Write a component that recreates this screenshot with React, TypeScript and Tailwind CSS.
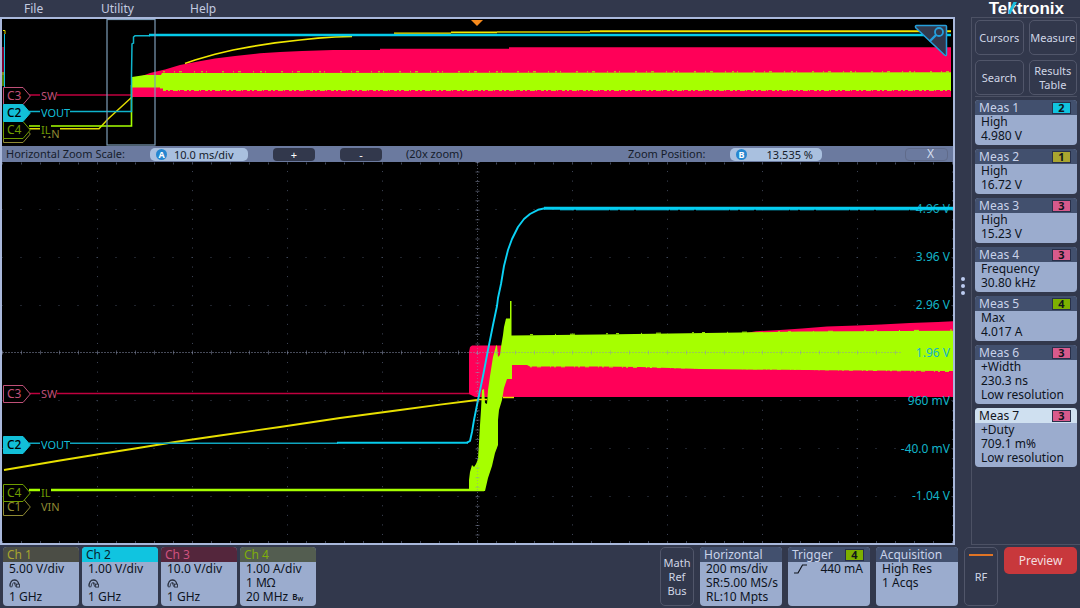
import type { ReactNode } from "react";

type Tone = "olive" | "cyan" | "pink" | "green";

const badgeTone: Record<Tone, string> = {
  olive: "bg-[#aaa52f]",
  cyan: "bg-[#10c4e0]",
  pink: "bg-[#d85a8c]",
  green: "bg-[#7db000]",
};

const tagTone: Record<Tone, string> = {
  olive: "text-[#8f8a33]",
  cyan: "text-[#12bfd8]",
  pink: "text-[#c05078]",
  green: "text-[#6f9c00]",
};

function Badge({ tone, children }: { tone: Tone; children: ReactNode }) {
  return (
    <span
      className={`flex h-[12px] w-[19px] items-center justify-center border border-[#28304a] text-[11px] leading-none font-bold text-[#10141c] ${badgeTone[tone]}`}
    >
      {children}
    </span>
  );
}

function Card({
  title,
  badge,
  head = "bg-[#42506e] text-[#c9d3ea]",
  className = "",
  children,
}: {
  title: string;
  badge?: ReactNode;
  head?: string;
  className?: string;
  children: ReactNode;
}) {
  return (
    <button
      type="button"
      className={`flex flex-col overflow-hidden rounded-[4px] bg-[#9bacce] pb-[2px] text-left text-[#0d131d] ${className}`}
    >
      <span className={`flex h-[15px] w-full items-center justify-between pr-[6px] pl-[4px] leading-[15px] ${head}`}>
        {title}
        {badge}
      </span>
      <span className="flex w-full flex-col pl-[6px]">{children}</span>
    </button>
  );
}

function Row({ children }: { children: ReactNode }) {
  return <span className="flex h-[14px] items-center leading-[14px] whitespace-pre">{children}</span>;
}

const measurements: { id: number; ch: string; tone: Tone; rows: string[]; active?: boolean }[] = [
  { id: 1, ch: "2", tone: "cyan", rows: ["High", "4.980 V"] },
  { id: 2, ch: "1", tone: "olive", rows: ["High", "16.72 V"] },
  { id: 3, ch: "3", tone: "pink", rows: ["High", "15.23 V"] },
  { id: 4, ch: "3", tone: "pink", rows: ["Frequency", "30.80 kHz"] },
  { id: 5, ch: "4", tone: "green", rows: ["Max", "4.017 A"] },
  { id: 6, ch: "3", tone: "pink", rows: ["+Width", "230.3 ns", "Low resolution"] },
  { id: 7, ch: "3", tone: "pink", rows: ["+Duty", "709.1 m%", "Low resolution"], active: true },
];

function ProbeIcon() {
  return (
    <svg width="12" height="9" viewBox="0 0 12 9" fill="none" stroke="#2a3140" aria-hidden="true">
      <path d="M1 7.5C1 3 2.8 1 5.3 1S9.6 3 9.6 5" strokeWidth="1.3" />
      <path d="M3.2 7.5C3.2 5 4 3.6 5.3 3.6S7 4.5 7.3 6M1 7.8h2.2M5.2 3.6l1.6 4.2" strokeWidth="0.9" />
      <rect x="7.6" y="5.2" width="2.9" height="2.9" strokeWidth="0.9" />
    </svg>
  );
}

const channels: { name: string; head: string; rows: ReactNode[] }[] = [
  { name: "Ch 1", head: "bg-[#4b4d45] text-[#a9a52f]", rows: ["5.00 V/div", <ProbeIcon key="p" />, "1 GHz"] },
  { name: "Ch 2", head: "bg-[#10c4e0] text-[#06222c]", rows: ["1.00 V/div", <ProbeIcon key="p" />, "1 GHz"] },
  { name: "Ch 3", head: "bg-[#54263c] text-[#d0527f]", rows: ["10.0 V/div", <ProbeIcon key="p" />, "1 GHz"] },
  {
    name: "Ch 4",
    head: "bg-[#535d50] text-[#7fae0a]",
    rows: [
      "1.00 A/div",
      "1 MΩ",
      <span key="bw" className="flex items-center">
        20 MHz
        <span className="pl-[4px] text-[8px] font-semibold">B</span>
        <span className="pt-[3px] text-[6px] font-semibold">W</span>
      </span>,
    ],
  },
];

function Tag({ name, tone, place, solid = false }: { name: string; tone: Tone; place: string; solid?: boolean }) {
  return (
    <div className={`absolute left-[1px] flex h-[18px] w-[28px] items-center pl-[4px] ${tagTone[tone]} ${place}`}>
      <svg className="absolute inset-0" width="28" height="18" viewBox="0 0 28 18" aria-hidden="true">
        <path d="M.5.5H20L27.3 9 20 17.5H.5Z" fill={solid ? "currentColor" : "#000"} stroke="currentColor" />
      </svg>
      <span className={`relative ${solid ? "font-medium text-black" : ""}`}>{name}</span>
    </div>
  );
}

function Label({ tone, place, children }: { tone: Tone; place: string; children: ReactNode }) {
  return (
    <span className={`absolute left-[38px] bg-black pl-[1px] text-[11px] leading-[12px] ${tagTone[tone]} ${place}`}>
      {children}
    </span>
  );
}

function Overview() {
  return (
    <div className="relative h-[127px] text-[12px]">
      <svg className="absolute inset-0 h-full w-full" viewBox="2 19 951 127" preserveAspectRatio="none" role="img" aria-label="Acquisition overview">
        <g fill="none">
          <path d="M4.5 34V87" stroke="#10c4e0" />
          <path d="M3 47V75" stroke="#ff0058" />
          <path d="M3 72V86" stroke="#a6ff00" />
          <path d="M3 30.5H5V34" stroke="#e8e000" />
          <path d="M29 95H132" stroke="#c0003f" strokeWidth="1.4" />
          <path d="M29 128.7H99L108 119 132 97" stroke="#e0da00" strokeWidth="1.5" />
          <path d="M185 63.5 195 60 215 54.2 233 50 250 46.8 275 42.8 300 40 318 38.2 335 37 352 36.5" stroke="#f0e800" strokeWidth="1.7" />
        </g>
        <path d="M131.500 80 142 76 150 73 165 69.500 180 65 198 61.500 215 58.500 235 56 260 53.300 280 52 302 51 333 50 H380V48.700H509V47.300H951V97H131.500Z" fill="#ff0058" />
        <path d="M132 77 145 75 161 75 162 73 951 72.300V90H163V88.500H160V87.500H132Z" fill="#a6ff00" />
        <g fill="none" stroke="#a6ff00">
          <path d="M163 71.800H951" strokeDasharray="2 9 1 4 3 12 1 6 2 3 1 15" />
          <path d="M163 90.400H951" strokeDasharray="3 2 2 3 5 1 1 4" />
          <path d="M29 126H131.500V85" strokeWidth="1.6" />
        </g>
        <g fill="none">
          <path d="M29 111.500H131.500V75L132 44 133.500 43V37L135 35.800H150" stroke="#0fb4cc" strokeWidth="1.5" />
          <path d="M149 35H951" stroke="#05cbea" strokeWidth="2.4" />
          <path d="M394 33.200H451" stroke="#f0e800" strokeWidth="1.2" />
          <path d="M451 32.400H497" stroke="#f0e800" strokeWidth="1.7" />
          <path d="M497 32H590" stroke="#d8d000" strokeWidth="1.5" />
          <path d="M590 31.200H951" stroke="#f0e400" strokeWidth="2" />
          <rect x="107" y="19.500" width="48" height="125.500" stroke="#7d9db8" strokeWidth="1.2" />
        </g>
        <path d="M471 20H483L477 26Z" fill="#f78a1d" />
      </svg>
      <Tag name="" tone="olive" place="top-[106px]" />
      <Label tone="olive" place="top-[109px]">VIN</Label>
      <Tag name="C4" tone="green" place="top-[102px]" />
      <Label tone="green" place="top-[105px]">IL</Label>
      <Tag name="C3" tone="pink" place="top-[68px]" />
      <Label tone="pink" place="top-[71px]">SW</Label>
      <Tag name="C2" tone="cyan" solid place="top-[85px]" />
      <Label tone="cyan" place="top-[88px]">VOUT</Label>
      <button type="button" aria-label="Zoom" className="absolute top-[5px] right-[5px]">
        <svg width="34" height="34" viewBox="0 0 34 34" fill="none" stroke="#259fdc" aria-hidden="true">
          <path d="M2.500 1.500H31.500Q32.500 1.500 32.500 2.500V30.500Q32.500 32.500 30.500 31L1.800 3.800Q.8 1.800 2.500 1.500Z" fill="#32384c" strokeWidth="1.5" />
          <circle cx="25" cy="8" r="4" strokeWidth="1.8" />
          <path d="M22 11 15.500 17.500" strokeWidth="2.4" />
        </svg>
      </button>
    </div>
  );
}

function ZoomBar() {
  return (
    <div className="flex h-[16px] items-center bg-[#6b7a9f] text-[11px] text-[#151c2b]">
      <label htmlFor="zoom-scale" className="w-[148px] pl-[4px]">
        Horizontal Zoom Scale:
      </label>
      <span className="flex h-[13px] w-[98px] items-center gap-[7px] rounded-[5px] bg-[#a9c0df] pl-[6px]">
        <span className="flex size-[11px] items-center justify-center rounded-full bg-[#2687d0] text-[9px] leading-none font-bold text-white">A</span>
        <input id="zoom-scale" defaultValue="10.0 ms/div" className="h-[13px] w-[68px] bg-transparent leading-[13px] outline-none" />
      </span>
      <button type="button" aria-label="Increase zoom" className="ml-[25px] flex h-[13px] w-[42px] items-center justify-center rounded-[4px] bg-[#32384c] leading-none text-white">
        +
      </button>
      <button type="button" aria-label="Decrease zoom" className="ml-[25px] flex h-[13px] w-[42px] items-center justify-center rounded-[4px] bg-[#32384c] leading-none text-white">
        -
      </button>
      <span className="ml-[24px]">(20x zoom)</span>
      <label htmlFor="zoom-position" className="ml-auto w-[102px]">
        Zoom Position:
      </label>
      <span className="flex h-[13px] w-[92px] items-center justify-between rounded-[5px] bg-[#a9c0df] pr-[9px] pl-[6px]">
        <span className="flex size-[11px] items-center justify-center rounded-full bg-[#2687d0] text-[9px] leading-none font-bold text-white">B</span>
        <input id="zoom-position" defaultValue="13.535 %" className="h-[13px] w-[60px] bg-transparent text-right leading-[13px] outline-none" />
      </span>
      <button type="button" aria-label="Close zoom" className="mr-[5px] ml-[83px] flex h-[13px] w-[43px] items-center justify-center rounded-[4px] border border-[#606b8a] pl-[8px] text-[12px] leading-none text-[#d3ddf0]">
        X
      </button>
    </div>
  );
}

const gridColumns = [97, 192, 287, 382, 572, 667, 762, 857];
const gridRows = [209, 257, 305, 400, 448, 496];

const scaleLabels = [
  { text: "3.96 V", place: "top-[24.9%]" },
  { text: "2.96 V", place: "top-[37.5%]" },
  { text: "1.96 V", place: "top-[50.1%]" },
  { text: "960 mV", place: "top-[62.6%]" },
  { text: "-40.0 mV", place: "top-[75.2%]" },
  { text: "-1.04 V", place: "top-[87.7%]" },
];

function Graticule() {
  return (
    <g fill="none" stroke="#3f4658">
      {gridColumns.map((x) => (
        <path key={x} d={`M${x}.5 162V543`} strokeDasharray="1 8.55" strokeDashoffset="0.5" />
      ))}
      {gridRows.map((y) => (
        <path key={y} d={`M2 ${y}.5H953`} strokeDasharray="1 18" strokeDashoffset="0.5" />
      ))}
      <path d="M2 163.500H953M2 542H953" strokeWidth="2" strokeDasharray="1 18" />
      <path d="M952.500 162V543" strokeDasharray="1 8.55" />
    </g>
  );
}

function Axes() {
  return (
    <g fill="none" stroke="#8c93b0" strokeOpacity="0.5">
      <path d="M2 352.500H901" strokeDasharray="2 1" />
      <path d="M2 352.500H901" strokeWidth="4" strokeDasharray="1 18" />
      <path d="M477.500 162V543" strokeDasharray="1 2" />
      <path d="M477.500 162V543" strokeWidth="4" strokeDasharray="1 8.55" />
    </g>
  );
}

function ZoomView() {
  return (
    <div className="relative min-h-[381px] flex-1 text-[12px]">
      <span className="absolute top-[12.400%] right-[3px] -translate-y-1/2 leading-[14px] text-[#12a9bd]">4.96 V</span>
      <svg className="absolute inset-0 h-full w-full" viewBox="2 162 951 381" preserveAspectRatio="none" role="img" aria-label="Zoomed waveforms">
        <Graticule />
        <g fill="none">
          <path d="M29 393.500H470" stroke="#c0003f" strokeWidth="1.4" />
          <path d="M4 470 60 460.500 97 454.500 135 448.500 175 442 220 435.500 280 427 340 418 400 410 440 404.700 477 400" stroke="#e8e000" strokeWidth="1.8" />
        </g>
        <path d="M469 352 470 347 472 345.500H505L740 334 756 331.300 780 330 802 328.500 827 326.500 857 325.500 881 324.500 910 323 938 322 953 321.300V397H475L469 394Z" fill="#ff0058" />
        <path d="M469 490V480L470 472 472 465 474 467 476 464 478 459 480 425 481 410 482 390 484 389 485 403 487 404 488 390 490 376 493 357 496 346 497 345 498 357 500 355 501 347 503 335 504 327 506 318.500H510V301H511.500V335.500L600 334.500 740 332.500 800 331.500 953 330.700V371L830 370.300 700 369 640 367 600 366.500H530L527 365H512V379H507L504 388 502 400 499 410 498 420V445L495 453 492 466 488 478 485 491H469Z" fill="#a6ff00" />
        <g fill="none" stroke="#a6ff00">
          <path d="M29 490H484" strokeWidth="2.6" />
          <path d="M530 334.700 740 332.200 953 330" strokeDasharray="3 22 1 14 5 31 2 8" />
          <path d="M530 366.800H600L953 371.500" strokeDasharray="2 5 4 9 1 3" />
        </g>
        <g fill="none">
          <path d="M477 399.500H487M503 397.500H514" stroke="#e8e000" strokeWidth="1.6" />
          <path d="M29 443.300H338" stroke="#0fa6bf" strokeWidth="1.5" />
          <path d="M337 442.700H468" stroke="#07cdec" strokeWidth="2" />
          <path d="M467 442.700 470 441 472 432 474 420 478 400 483 376 488 350 493 325 497 306 498 298 501 284 504 266 508 250 512 239 518 227 524 219 530 214 538 209.800 545 208.300" stroke="#0bd2f5" strokeWidth="1.9" strokeLinejoin="round" />
          <path d="M544 208.300H953" stroke="#05cdf0" strokeWidth="3" />
          <path d="M560 209.800H953" stroke="#05cdf0" strokeWidth="1" strokeDasharray="14 2 33 1 8 2" />
        </g>
        <Axes />
      </svg>
      <Tag name="C3" tone="pink" place="top-[58.600%]" />
      <Label tone="pink" place="top-[59.400%]">SW</Label>
      <Tag name="C2" tone="cyan" solid place="top-[71.800%]" />
      <Label tone="cyan" place="top-[72.600%]">VOUT</Label>
      <Tag name="C1" tone="olive" place="top-[88.100%]" />
      <Label tone="olive" place="top-[88.900%]">VIN</Label>
      <Tag name="C4" tone="green" place="top-[84.400%]" />
      <Label tone="green" place="top-[85.200%]">IL</Label>
      {scaleLabels.map((l) => (
        <span key={l.text} className={`absolute right-[3px] -translate-y-1/2 leading-[14px] text-[#12b4c8] ${l.place}`}>
          {l.text}
        </span>
      ))}
    </div>
  );
}

function PanelButton({ children }: { children: ReactNode }) {
  return (
    <button type="button" className="flex h-[35px] items-center justify-center rounded-[5px] border border-[#51566a] text-center text-[11px] leading-[14px] text-[#d0d6e6]">
      {children}
    </button>
  );
}

function Logo() {
  return (
    <span className="mr-[16px] font-['Liberation_Sans',sans-serif] text-[17px] leading-[17px] font-bold text-white">
      Te
      <span className="relative">
        k
        <svg className="absolute bottom-[4px] left-[2px]" width="8" height="12" viewBox="0 0 8 12" aria-hidden="true">
          <path d="M0 12V8.500L4.500 0H8L3.500 8 1.500 12Z" fill="#18bfe0" />
        </svg>
      </span>
      tronix
    </span>
  );
}

export default function App() {
  return (
    <div className="flex min-h-screen flex-col bg-[#32384c] font-['Noto_Sans','Open_Sans',sans-serif] text-[12px] leading-[14px] whitespace-nowrap">
      <header className="flex h-[17px] items-center justify-between">
        <nav className="flex items-center pl-[24px] text-[#c3cbe0]">
          <button type="button" className="w-[77px] text-left">File</button>
          <button type="button" className="w-[89px] text-left">Utility</button>
          <button type="button">Help</button>
        </nav>
        <Logo />
      </header>

      <div className="flex flex-1">
        <main className="flex min-w-0 flex-1 flex-col border-2 border-[#a9b8db] bg-black">
          <Overview />
          <ZoomBar />
          <ZoomView />
        </main>
        <button type="button" aria-label="Resize results panel" className="flex w-[16px] flex-col items-center justify-center gap-[3px] pt-[10px]">
          <span className="size-[4px] rounded-full bg-[#bccbf0]" />
          <span className="size-[4px] rounded-full bg-[#bccbf0]" />
          <span className="size-[4px] rounded-full bg-[#bccbf0]" />
        </button>
        <aside className="flex w-[109px] flex-col border-t border-b border-l border-[#4c5164] pt-[2px] pr-[3px] pl-[3px]">
          <div className="grid grid-cols-2 gap-x-[5px] gap-y-[5px] border-b border-[#4c5164] pb-[1px]">
            <PanelButton>Cursors</PanelButton>
            <PanelButton>Measure</PanelButton>
            <PanelButton>Search</PanelButton>
            <PanelButton>
              Results
              <br />
              Table
            </PanelButton>
          </div>
          <div className="flex flex-col gap-[4px] pt-[3px]">
            {measurements.map((m) => (
              <Card
                key={m.id}
                title={`Meas ${m.id}`}
                badge={<Badge tone={m.tone}>{m.ch}</Badge>}
                head={m.active ? "bg-[#cfe0f0] text-[#10141c]" : undefined}
              >
                {m.rows.map((r) => (
                  <Row key={r}>{r}</Row>
                ))}
              </Card>
            ))}
          </div>
        </aside>
      </div>

      <footer className="flex h-[63px] items-start pt-[2px] pr-[3px] pl-[3px]">
        <div className="flex gap-[3px]">
          {channels.map((c) => (
            <Card key={c.name} title={c.name} head={c.head} className="w-[76px]">
              {c.rows.map((r, i) => (
                <Row key={i}>{r}</Row>
              ))}
            </Card>
          ))}
        </div>
        <div className="ml-auto flex gap-[6px]">
          <button type="button" className="h-[59px] w-[34px] rounded-[5px] border border-[#51566a] text-[11px] leading-[14px] text-[#d0d6e6]">
            Math
            <br />
            Ref
            <br />
            Bus
          </button>
          <Card title="Horizontal" className="h-[59px] w-[82px]">
            <Row>200 ms/div</Row>
            <Row>SR:5.00 MS/s</Row>
            <Row>RL:10 Mpts</Row>
          </Card>
          <Card title="Trigger" badge={<Badge tone="green">4</Badge>} className="h-[59px] w-[82px]">
            <span className="flex h-[14px] items-center justify-between pr-[7px]">
              <svg width="13" height="10" viewBox="0 0 13 10" fill="none" stroke="#10141c" strokeWidth="1.2" aria-hidden="true">
                <path d="M0 9H4L8.500 1H13" />
              </svg>
              440 mA
            </span>
          </Card>
          <Card title="Acquisition" className="h-[59px] w-[82px]">
            <Row>High Res</Row>
            <Row>1 Acqs</Row>
          </Card>
          <button type="button" className="flex h-[59px] w-[34px] flex-col items-center rounded-[5px] border border-[#51566a] pt-[6px] text-[11px] text-[#d0d6e6]">
            <span className="h-[2px] w-[24px] bg-[#e07425]" />
            <span className="mt-[14px]">RF</span>
          </button>
          <button type="button" className="h-[27px] w-[73px] rounded-[5px] bg-[#c8383c] text-[#f3dcdf]">
            Preview
          </button>
        </div>
      </footer>
    </div>
  );
}
